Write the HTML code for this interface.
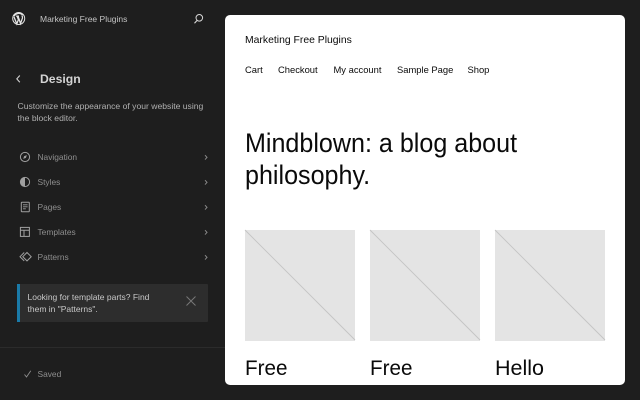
<!DOCTYPE html>
<html>
<head>
<meta charset="utf-8">
<style>
html,body{margin:0;padding:0;width:640px;height:400px;overflow:hidden;background:#1e1e1e;font-family:"Liberation Sans",sans-serif}
.t{position:absolute;white-space:nowrap;line-height:1;transform-origin:left center}
svg{position:absolute;overflow:visible}
#f{position:absolute;inset:0;filter:blur(.35px)}
.n{font-size:8.4px;color:#8f8f8f;left:37.5px}
.c{left:203.5px;stroke:#8a8a8a;fill:none;stroke-width:1}
.i{stroke:#a0a0a0;fill:none;stroke-width:1}
#p{position:absolute;left:225px;top:15px;width:400px;height:370px;background:#fff;border-radius:5px;overflow:hidden}
.k{position:absolute;top:215px;width:110px;height:110.5px;background:#e4e4e4}
.k svg{left:0;top:0}
.d{color:#0a0a0a}
.h{font-size:26.5px;transform:scaleX(.947)}
.m{top:50px;font-size:9.4px}
</style>
</head>
<body>
<div id="f">
<svg style="left:12px;top:12px" width="14" height="14" viewBox="0 0 14 14"><circle cx="6.7" cy="6.5" r="6" fill="none" stroke="#e4e4e4" stroke-width="1"/><path d="M2 5 L4.8 11.8 L6.4 7.6 L5.1 4.1 M4.1 4.1 H7 M6 4.1 L8.5 11.5 L10.4 6.2 C10.8 5 10.1 4.1 9.9 3.4 M2 4.3 C2.8 2.8 4.8 1.3 6.8 1.3 C8.3 1.3 9.8 2 10.6 3" fill="none" stroke="#e4e4e4" stroke-width="1.3"/></svg>
<div class="t" style="left:40px;top:14.5px;font-size:8.5px;color:#c4c4c4">Marketing Free Plugins</div>
<svg style="left:193px;top:13px" width="12" height="12" viewBox="0 0 12 12"><circle cx="6.3" cy="4.8" r="3.3" fill="none" stroke="#d8d8d8" stroke-width="1"/><path d="M4.2 7.3 L1.5 10.3" stroke="#d8d8d8" stroke-width="1.1"/></svg>
<svg style="left:15px;top:74px" width="7" height="10" viewBox="0 0 7 10"><path d="M4.8 1.5 L1.8 4.9 L4.8 8.3" fill="none" stroke="#d0d0d0" stroke-width="1.1"/></svg>
<div class="t" style="left:40px;top:72.5px;font-size:12.2px;font-weight:bold;color:#d4d4d4">Design</div>
<div class="t" style="left:17.5px;top:101.5px;font-size:8.6px;color:#b0b0b0">Customize the appearance of your website using</div>
<div class="t" style="left:17.5px;top:113.5px;font-size:8.6px;color:#b0b0b0">the block editor.</div>

<svg class="i" style="left:20px;top:152px" width="11" height="11" viewBox="0 0 11 11"><circle cx="5" cy="5" r="4.6"/><path d="M3.2 6.9 L4.2 4.1 L6.9 3.1 L5.9 5.9 Z" fill="#a0a0a0" stroke="none"/></svg>
<div class="t n" style="top:152.5px">Navigation</div>
<svg class="c" style="top:153.5px" width="5" height="8" viewBox="0 0 5 8"><path d="M1 1.2 L3 3.4 L1 5.6"/></svg>

<svg class="i" style="left:20px;top:177px" width="11" height="11" viewBox="0 0 11 11"><circle cx="5" cy="5" r="4.6"/><path d="M5 .4 A4.6 4.6 0 0 0 5 9.6 Z" fill="#a0a0a0" stroke="none"/></svg>
<div class="t n" style="top:177.5px">Styles</div>
<svg class="c" style="top:178.5px" width="5" height="8" viewBox="0 0 5 8"><path d="M1 1.2 L3 3.4 L1 5.6"/></svg>

<svg class="i" style="left:21px;top:202px" width="9" height="11" viewBox="0 0 9 11"><rect x=".3" y=".3" width="8" height="9.4" rx=".5"/><path d="M2 2.8 H6.6 M2 4.8 H6.6 M2 6.8 H4.8" stroke-width=".9"/></svg>
<div class="t n" style="top:202.5px">Pages</div>
<svg class="c" style="top:203.5px" width="5" height="8" viewBox="0 0 5 8"><path d="M1 1.2 L3 3.4 L1 5.6"/></svg>

<svg class="i" style="left:20px;top:227px" width="10" height="10" viewBox="0 0 10 10"><rect x=".4" y=".4" width="9" height="9"/><path d="M.4 3.3 H9.4 M4 3.3 V9.4"/></svg>
<div class="t n" style="top:227.5px">Templates</div>
<svg class="c" style="top:228.5px" width="5" height="8" viewBox="0 0 5 8"><path d="M1 1.2 L3 3.4 L1 5.6"/></svg>

<svg class="i" style="left:19px;top:252px" width="13" height="10" viewBox="0 0 13 10"><path d="M8 .5 L12.2 4.7 L8 8.9 L3.8 4.7 Z M5.2 .5 L1 4.7 L5.2 8.9"/></svg>
<div class="t n" style="top:252.5px">Patterns</div>
<svg class="c" style="top:253.5px" width="5" height="8" viewBox="0 0 5 8"><path d="M1 1.2 L3 3.4 L1 5.6"/></svg>

<div style="position:absolute;left:17px;top:284px;width:191px;height:38px;background:#2d2d2d;border-radius:1px"></div>
<div style="position:absolute;left:17px;top:284px;width:3px;height:38px;background:#1a7aa8"></div>
<div class="t" style="left:27.5px;top:293px;font-size:8.5px;color:#c8c8c8">Looking for template parts? Find</div>
<div class="t" style="left:27.5px;top:304.5px;font-size:8.5px;color:#c8c8c8">them in "Patterns".</div>
<svg style="left:186px;top:296px" width="10" height="10" viewBox="0 0 10 10"><path d="M.5 .5 L9.5 9.5 M9.5 .5 L.5 9.5" stroke="#777" stroke-width="1"/></svg>

<div style="position:absolute;left:0;top:347px;width:225px;height:1px;background:#2b2b2b"></div>
<svg style="left:24px;top:370px" width="8" height="8" viewBox="0 0 8 8"><path d="M.5 4.5 L2.5 7 L6.8 .8" fill="none" stroke="#8f8f8f" stroke-width=".9"/></svg>
<div class="t n" style="top:369.5px">Saved</div>

<div id="p">
<div class="t d" style="left:20px;top:21px;font-size:10.4px">Marketing Free Plugins</div>
<div class="t d m" style="left:20px">Cart</div>
<div class="t d m" style="left:53px">Checkout</div>
<div class="t d m" style="left:108.5px">My account</div>
<div class="t d m" style="left:172px">Sample Page</div>
<div class="t d m" style="left:242.5px">Shop</div>
<div class="t d h" style="left:20px;top:115px">Mindblown: a blog about</div>
<div class="t d h" style="left:20px;top:147px">philosophy.</div>
<div class="k" style="left:20px"><svg width="110" height="110"><path d="M0 0 L110 110" stroke="#c4c4c4" stroke-width=".9"/></svg></div>
<div class="k" style="left:145px"><svg width="110" height="110"><path d="M0 0 L110 110" stroke="#c4c4c4" stroke-width=".9"/></svg></div>
<div class="k" style="left:270px"><svg width="110" height="110"><path d="M0 0 L110 110" stroke="#c4c4c4" stroke-width=".9"/></svg></div>
<div class="t d" style="left:20px;top:342.5px;font-size:21.5px;transform:scaleX(.96)">Free</div>
<div class="t d" style="left:145px;top:342.5px;font-size:21.5px;transform:scaleX(.96)">Free</div>
<div class="t d" style="left:270px;top:342.5px;font-size:21.5px">Hello</div>
</div>
</div>
</body>
</html>
